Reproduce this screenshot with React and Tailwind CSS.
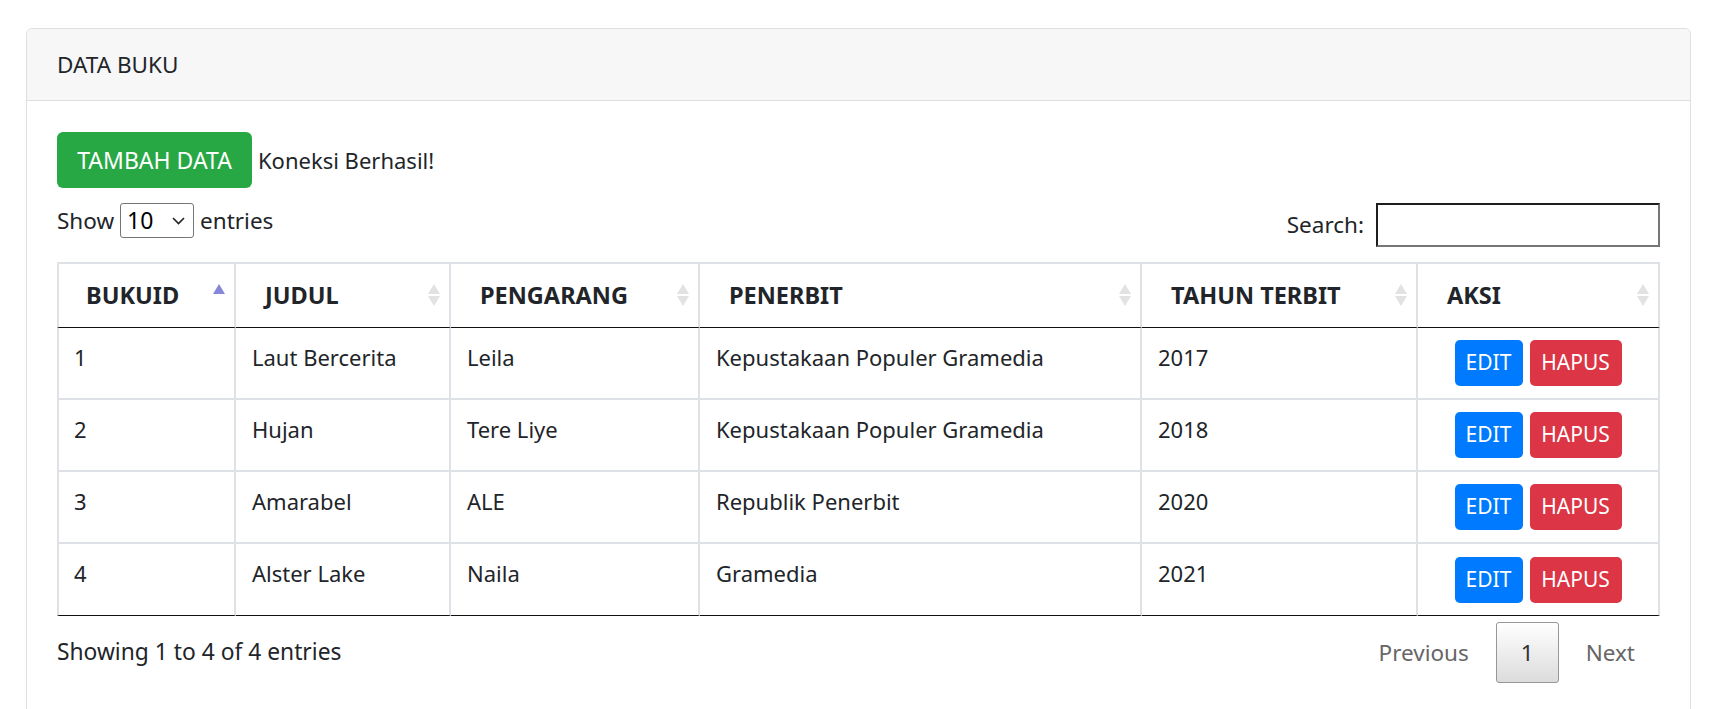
import React from "react";

const books = [
  { id: 1, judul: "Laut Bercerita", pengarang: "Leila", penerbit: "Kepustakaan Populer Gramedia", tahun: "2017" },
  { id: 2, judul: "Hujan", pengarang: "Tere Liye", penerbit: "Kepustakaan Populer Gramedia", tahun: "2018" },
  { id: 3, judul: "Amarabel", pengarang: "ALE", penerbit: "Republik Penerbit", tahun: "2020" },
  { id: 4, judul: "Alster Lake", pengarang: "Naila", penerbit: "Gramedia", tahun: "2021" },
];

const columns = [
  { label: "BUKUID", width: "w-[179px]", active: true },
  { label: "JUDUL", width: "w-[215px]" },
  { label: "PENGARANG", width: "w-[249px]" },
  { label: "PENERBIT", width: "w-[442px]" },
  { label: "TAHUN TERBIT", width: "w-[276px]" },
  { label: "AKSI", width: "w-[242px]" },
];

function SortIcon({ active }) {
  if (active) {
    return (
      <svg width="12" height="23" viewBox="0 0 12 23" className="shrink-0">
        <polygon points="6,0 12,10 0,10" fill="#8687da" />
      </svg>
    );
  }
  return (
    <svg width="12" height="23" viewBox="0 0 12 23" className="shrink-0">
      <polygon points="6,0 12,10 0,10" fill="#e2e2e2" />
      <polygon points="0,12 12,12 6,22" fill="#e2e2e2" />
    </svg>
  );
}

export default function App() {
  return (
    <div className="min-h-screen bg-white pt-[28px] pl-[26px] pr-[33px] text-[22px] text-[#212529] font-['Noto_Sans',sans-serif]">
      <div className="rounded-[6px] border border-[#dfdfdf] min-h-[700px]">
        {/* card header */}
        <div className="h-[72px] flex items-center px-[30px] bg-[#f7f7f7] border-b border-[#dfdfdf] rounded-t-[6px] text-[22.5px]">
          DATA BUKU
        </div>

        <div className="px-[30px] pt-[31px]">
          <div className="flex items-baseline">
            <button className="w-[195px] h-[56px] rounded-[6px] bg-[#28a745] text-white text-[23px] leading-[56px]">TAMBAH DATA</button>
            <span className="ml-[6px]">Koneksi Berhasil!</span>
          </div>

          <div className="flex justify-between items-start mt-[15px] text-[22.5px]">
            <div className="flex items-center h-[35px] gap-[6px]">
              <span>Show</span>
              <div className="relative">
                <select className="appearance-none w-[74px] h-[35px] pl-[6px] border border-[#767676] rounded-[3px] bg-white text-[23px] leading-none text-black">
                  <option>10</option>
                  <option>25</option>
                  <option>50</option>
                  <option>100</option>
                </select>
                <svg width="13" height="8" viewBox="0 0 13 8" className="absolute right-[9px] top-[14px] pointer-events-none">
                  <path d="M1 1 L6.5 6.5 L12 1" fill="none" stroke="#222" strokeWidth="1.6" />
                </svg>
              </div>
              <span>entries</span>
            </div>
            <div className="flex items-center h-[44px] gap-[12px]">
              <span>Search:</span>
              <input className="w-[284px] h-[44px] border-2 border-t-[#1e1e1e] border-l-[#1e1e1e] border-b-[#767676] border-r-[#767676] bg-white" />
            </div>
          </div>

          <table className="mt-[15px] w-[1603px] table-fixed border-separate border-spacing-0">
            <thead>
              <tr>
                {columns.map((c, i) => (
                  <th
                    key={c.label}
                    className={`${c.width} h-[66px] p-0 border-t-2 border-r-2 border-[#dee2e6] border-b border-b-[#111] ${i === 0 ? "border-l-2" : ""}`}
                  >
                    <div className={`flex items-center justify-between pr-[9px] font-bold text-[23.5px] text-left ${i === 0 ? "pl-[27px]" : "pl-[29px]"}`}>
                      <span>{c.label}</span>
                      <SortIcon active={c.active} />
                    </div>
                  </th>
                ))}
              </tr>
            </thead>
            <tbody>
              {books.map((b, r) => {
                const last = r === books.length - 1;
                const border = `border-r-2 border-[#dee2e6] ${last ? "border-b border-b-[#111]" : "border-b-2"}`;
                const rowCls = `h-[72px] px-[16px] pt-[13px] align-top leading-[33px] ${border}`;
                return (
                  <tr key={b.id}>
                    <td className={`${rowCls} border-l-2 pl-[15px]`}>{b.id}</td>
                    <td className={rowCls}>{b.judul}</td>
                    <td className={rowCls}>{b.pengarang}</td>
                    <td className={rowCls}>{b.penerbit}</td>
                    <td className={rowCls}>{b.tahun}</td>
                    <td className={`h-[72px] px-[16px] align-middle ${border}`}>
                      <div className="flex justify-center gap-[7px] text-[21px] text-white">
                        <button className="w-[68px] h-[46px] rounded-[5px] bg-[#007bff]">EDIT</button>
                        <button className="w-[92px] h-[46px] rounded-[5px] bg-[#dc3545]">HAPUS</button>
                      </div>
                    </td>
                  </tr>
                );
              })}
            </tbody>
          </table>

          <div className="flex justify-between items-center mt-[6px] w-[1603px]">
            <div className="text-[22.8px]">Showing 1 to 4 of 4 entries</div>
            <div className="flex items-center text-[#666] text-[22.5px]">
              <span className="px-[24px] py-[12px] border border-transparent">Previous</span>
              <span className="ml-[2px] min-w-[62px] h-[61px] px-[24px] flex items-center justify-center border border-[#979797] rounded-[3px] bg-gradient-to-b from-white to-[#dcdcdc] text-[#333]">1</span>
              <span className="ml-[2px] px-[24px] py-[12px] border border-transparent">Next</span>
            </div>
          </div>
        </div>
      </div>
    </div>
  );
}
